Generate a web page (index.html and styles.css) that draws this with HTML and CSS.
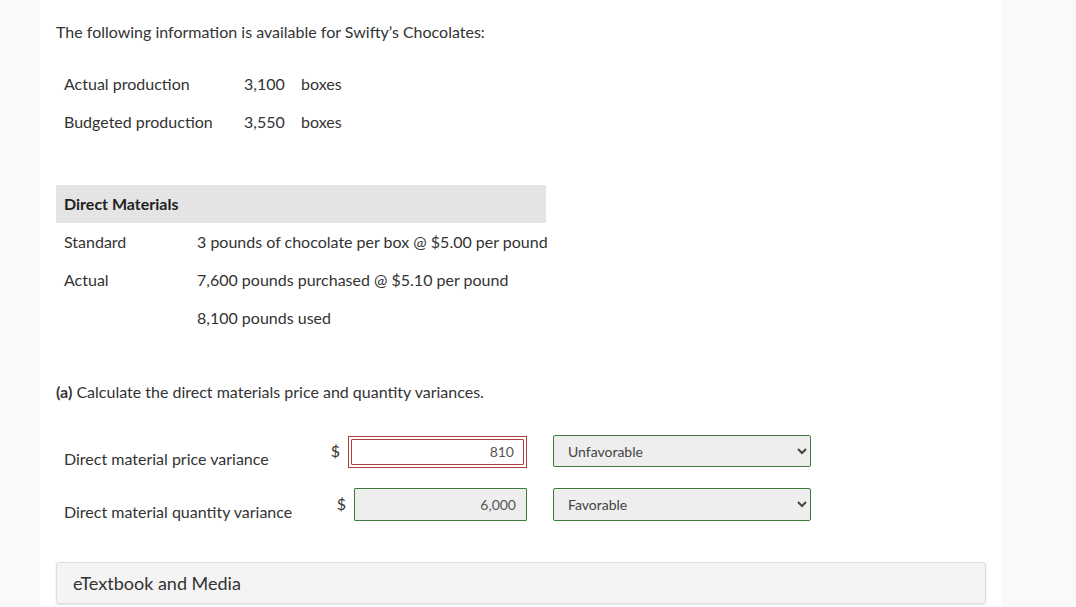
FILE: index.html
```html
<!DOCTYPE html>
<html lang="en">
<head>
    <meta charset="UTF-8">
    <meta name="viewport" content="width=device-width, initial-scale=1.0">
    <title>Direct Materials Variances</title>
    <link rel="stylesheet" href="styles.css">
</head>
<body>
    <div class="panel">
        <p class="intro">The following information is available for Swifty’s Chocolates:</p>

        <table class="info-table production">
            <tr>
                <td class="col-label">Actual production</td>
                <td class="col-num">3,100</td>
                <td>boxes</td>
            </tr>
            <tr>
                <td class="col-label">Budgeted production</td>
                <td class="col-num">3,550</td>
                <td>boxes</td>
            </tr>
        </table>

        <table class="info-table materials">
            <colgroup>
                <col class="dm-label">
                <col>
            </colgroup>
            <tr>
                <th colspan="2">Direct Materials</th>
            </tr>
            <tr>
                <td>Standard</td>
                <td>3 pounds of chocolate per box @ $5.00 per pound</td>
            </tr>
            <tr>
                <td>Actual</td>
                <td>7,600 pounds purchased @ $5.10 per pound</td>
            </tr>
            <tr>
                <td></td>
                <td>8,100 pounds used</td>
            </tr>
        </table>

        <p class="question"><b>(a)</b> Calculate the direct materials price and quantity variances.</p>

        <div class="answers">
            <div class="answer-row">
                <label class="answer-label" for="priceVar">Direct material price variance</label>
                <div class="money">
                    <span class="dollar">$</span>
                    <div class="wrong-wrap">
                        <input type="text" id="priceVar" class="amount wrong" value="810">
                    </div>
                </div>
                <select class="verdict">
                    <option>Unfavorable</option>
                    <option>Favorable</option>
                </select>
            </div>
            <div class="answer-row">
                <label class="answer-label" for="qtyVar">Direct material quantity variance</label>
                <div class="money">
                    <span class="dollar">$</span>
                    <input type="text" id="qtyVar" class="amount correct" value="6,000">
                </div>
                <select class="verdict">
                    <option>Favorable</option>
                    <option>Unfavorable</option>
                </select>
            </div>
        </div>

        <div class="media-bar">eTextbook and Media</div>
    </div>
</body>
</html>
```

FILE: styles.css
```css
html, body {
    margin: 0;
    background-color: #f9f9f9;
}

body {
    font-family: Lato, "Open Sans", Arial, sans-serif;
    font-size: 16px;
    line-height: 22px;
    color: #333;
}

.panel {
    margin-left: 40px;
    width: 961px;
    min-height: 607px;
    box-sizing: border-box;
    background-color: #fff;
    padding: 21px 15px 0 16px;
}

.intro {
    margin: 0;
}

.info-table {
    border-collapse: collapse;
}

.info-table td,
.info-table th {
    box-sizing: border-box;
    height: 38px;
    padding: 0 8px;
    text-align: left;
    vertical-align: middle;
    white-space: nowrap;
}

.production {
    margin-top: 22px;
}

.production .col-label {
    width: 180px;
}

.production .col-num {
    width: 57px;
}

.materials {
    margin-top: 44px;
    width: 490px;
    table-layout: fixed;
}

.materials .dm-label {
    width: 133px;
}

.materials th {
    background-color: #e4e4e4;
    font-weight: bold;
    color: #222;
}

.question {
    margin: 44px 0 0;
}

.answers {
    margin-top: 32px;
    display: flex;
    flex-direction: column;
    gap: 20px;
}

.answer-row {
    display: flex;
    align-items: flex-start;
    height: 33px;
}

.answer-label {
    box-sizing: border-box;
    width: 272px;
    padding: 13px 0 0 8px;
}

.money {
    width: 199px;
    height: 33px;
    display: flex;
    align-items: center;
    justify-content: flex-end;
    gap: 8px;
}

.dollar {
    margin-top: -2px;
}

.amount {
    box-sizing: border-box;
    height: 33px;
    width: 173px;
    font-family: inherit;
    font-size: 14px;
    color: #555;
    text-align: right;
    padding: 0 10px;
    border-radius: 1px;
}

.amount.correct {
    background-color: #eee;
    border: 1px solid #3f7b3b;
}

.wrong-wrap {
    border: 1px solid #b33c3c;
    padding: 2px;
    box-sizing: border-box;
    height: 32px;
    display: flex;
}

.amount.wrong {
    height: 26px;
    width: 173px;
    background-color: #fff;
    border: 1px solid #b33c3c;
    padding-right: 9px;
}

.verdict {
    margin-left: 26px;
    width: 258px;
    height: 33px;
    box-sizing: border-box;
    background-color: #eee;
    border: 1px solid #3f7b3b;
    border-radius: 2px;
    font-family: inherit;
    font-size: 14px;
    color: #444;
    padding-left: 10px;
}

.answer-row:first-child .verdict {
    height: 32px;
}

.media-bar {
    margin-top: 41px;
    width: 930px;
    box-sizing: border-box;
    height: 42px;
    background-color: #f4f4f4;
    border: 1px solid #dedede;
    border-radius: 3px;
    box-shadow: 0 1px 2px rgba(0, 0, 0, 0.12);
    font-size: 18px;
    line-height: 40px;
    padding-left: 16px;
    color: #333;
}
```
